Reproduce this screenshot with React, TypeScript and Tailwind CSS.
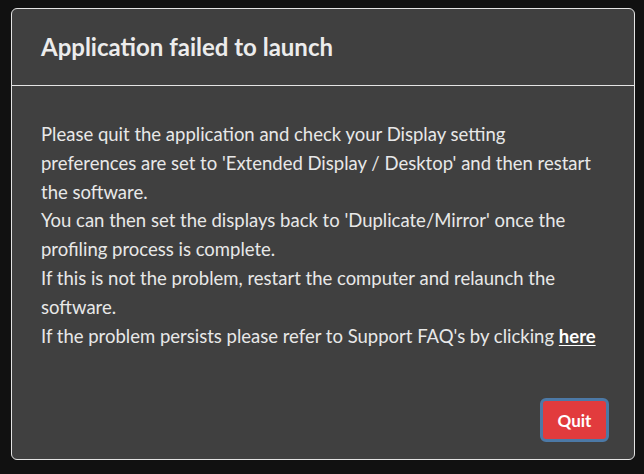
const BODY_LINES = [
  "Please quit the application and check your Display setting preferences are set to 'Extended Display / Desktop' and then restart the software.",
  "You can then set the displays back to 'Duplicate/Mirror' once the profiling process is complete.",
  "If this is not the problem, restart the computer and relaunch the software.",
];

export default function App() {
  return (
    <main className="h-screen w-full bg-[#111111] pl-[11px] pr-[9px] pt-[8px] pb-[14px] font-['Lato',sans-serif]">
      <div className="flex h-full flex-col rounded-md border border-[#e4e4e4] bg-[#404040] text-[#e8e8e8]">
        <header className="flex h-[77px] items-center border-b border-[#e4e4e4] px-[29px] pb-[1px]">
          <h1 className="text-[24px] font-bold leading-none text-[#ececec]">
            Application failed to launch
          </h1>
        </header>

        <section className="flex-1 px-[29px] pt-[34px] text-[18.5px] leading-[28.8px]">
          {BODY_LINES.map((line) => (
            <p key={line}>{line}</p>
          ))}
          <p>
            If the problem persists please refer to Support FAQ's by clicking{" "}
            <a href="#" className="font-bold text-white underline underline-offset-2">
              here
            </a>
          </p>
        </section>

        <footer className="flex justify-end pr-[25px] pb-[17px]">
          <button className="h-[44px] w-[69px] rounded-md border-[3px] border-[#4c79a6] bg-[#e23b3d] pt-[1px] text-[17px] font-bold text-white">
            Quit
          </button>
        </footer>
      </div>
    </main>
  );
}
